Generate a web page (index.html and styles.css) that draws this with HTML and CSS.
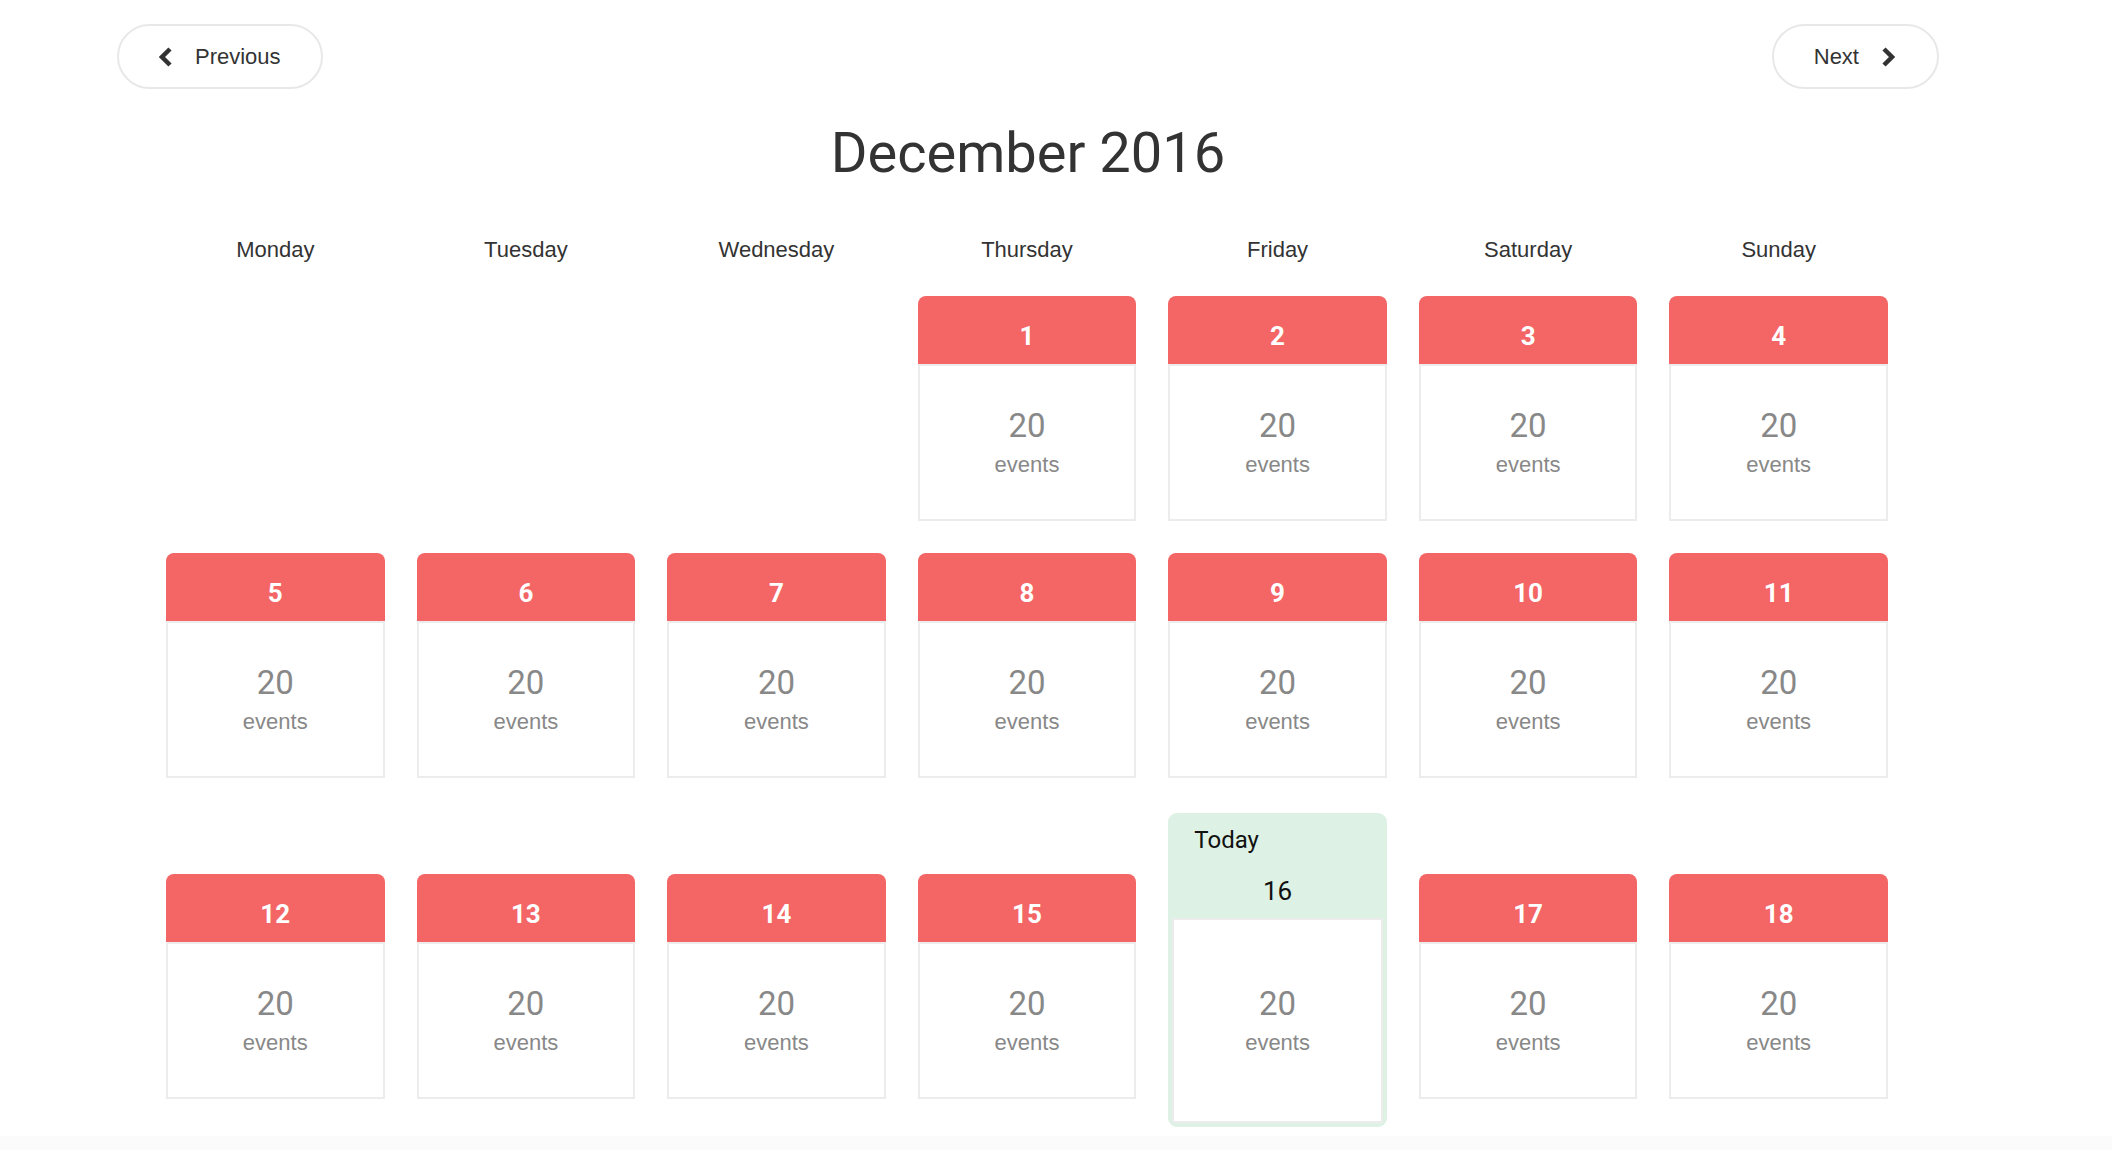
FILE: index.html
```html
<!DOCTYPE html>
<html lang="en">
<head>
<meta charset="utf-8">
<title>December 2016</title>
<link rel="stylesheet" href="styles.css">
</head>
<body>
<div class="page">
  <nav class="nav">
    <button class="nav-btn">
      <svg class="chev" width="14" height="20" viewBox="0 0 14 20"><polyline points="11,2 3,10 11,18"/></svg>
      <span>Previous</span>
    </button>
    <button class="nav-btn nav-next">
      <span>Next</span>
      <svg class="chev" width="14" height="20" viewBox="0 0 14 20"><polyline points="3,2 11,10 3,18"/></svg>
    </button>
  </nav>

  <h1 class="title">December 2016</h1>

  <div class="calendar">
    <div class="week weekdays">
      <div class="wd">Monday</div>
      <div class="wd">Tuesday</div>
      <div class="wd">Wednesday</div>
      <div class="wd">Thursday</div>
      <div class="wd">Friday</div>
      <div class="wd">Saturday</div>
      <div class="wd">Sunday</div>
    </div>

    <div class="week">
      <div class="empty"></div>
      <div class="empty"></div>
      <div class="empty"></div>
      <div class="day"><div class="day-head">1</div><div class="day-body"><span class="count">20</span><span class="label">events</span></div></div>
      <div class="day"><div class="day-head">2</div><div class="day-body"><span class="count">20</span><span class="label">events</span></div></div>
      <div class="day"><div class="day-head">3</div><div class="day-body"><span class="count">20</span><span class="label">events</span></div></div>
      <div class="day"><div class="day-head">4</div><div class="day-body"><span class="count">20</span><span class="label">events</span></div></div>
    </div>

    <div class="week">
      <div class="day"><div class="day-head">5</div><div class="day-body"><span class="count">20</span><span class="label">events</span></div></div>
      <div class="day"><div class="day-head">6</div><div class="day-body"><span class="count">20</span><span class="label">events</span></div></div>
      <div class="day"><div class="day-head">7</div><div class="day-body"><span class="count">20</span><span class="label">events</span></div></div>
      <div class="day"><div class="day-head">8</div><div class="day-body"><span class="count">20</span><span class="label">events</span></div></div>
      <div class="day"><div class="day-head">9</div><div class="day-body"><span class="count">20</span><span class="label">events</span></div></div>
      <div class="day"><div class="day-head">10</div><div class="day-body"><span class="count">20</span><span class="label">events</span></div></div>
      <div class="day"><div class="day-head">11</div><div class="day-body"><span class="count">20</span><span class="label">events</span></div></div>
    </div>

    <div class="week has-today">
      <div class="day"><div class="day-head">12</div><div class="day-body"><span class="count">20</span><span class="label">events</span></div></div>
      <div class="day"><div class="day-head">13</div><div class="day-body"><span class="count">20</span><span class="label">events</span></div></div>
      <div class="day"><div class="day-head">14</div><div class="day-body"><span class="count">20</span><span class="label">events</span></div></div>
      <div class="day"><div class="day-head">15</div><div class="day-body"><span class="count">20</span><span class="label">events</span></div></div>
      <div class="today">
        <div class="today-head">
          <div class="today-label">Today</div>
          <div class="today-date">16</div>
        </div>
        <div class="today-body"><span class="count">20</span><span class="label">events</span></div>
      </div>
      <div class="day"><div class="day-head">17</div><div class="day-body"><span class="count">20</span><span class="label">events</span></div></div>
      <div class="day"><div class="day-head">18</div><div class="day-body"><span class="count">20</span><span class="label">events</span></div></div>
    </div>
  </div>
</div>
<div class="footer"></div>
</body>
</html>
```

FILE: styles.css
```css
html, body {
  margin: 0;
  padding: 0;
  background: #ffffff;
}

body {
  font-family: "Liberation Sans", Arial, sans-serif;
  color: #333333;
}

.page {
  width: 1822px;
  margin-left: 117px;
  padding-top: 24px;
}

.nav {
  display: flex;
  justify-content: space-between;
  align-items: center;
}

.nav-btn {
  display: flex;
  align-items: center;
  gap: 22px;
  height: 65px;
  padding: 0 40px;
  border: 2px solid #e8e8e8;
  border-radius: 33px;
  background: #ffffff;
  font-family: "Liberation Sans", Arial, sans-serif;
  font-size: 22px;
  color: #333333;
  line-height: 22px;
  cursor: pointer;
}

.nav-next {
  padding: 0 42px 0 40px;
}

.chev polyline {
  fill: none;
  stroke: #333333;
  stroke-width: 4.5;
  stroke-linejoin: miter;
  stroke-linecap: butt;
}

.title {
  margin: 36px 0 0;
  font-family: Roboto, "Liberation Sans", sans-serif;
  font-weight: 400;
  font-size: 56px;
  line-height: 56px;
  text-align: center;
  color: #333333;
}

.calendar {
  margin-top: 58px;
  padding: 0 51px 0 49px;
  display: flex;
  flex-direction: column;
  gap: 32px;
}

.week {
  display: grid;
  grid-template-columns: repeat(7, 1fr);
  column-gap: 32px;
  align-items: start;
}

.weekdays {
  margin-bottom: 3px;
}

.wd {
  text-align: center;
  font-size: 22px;
  line-height: 22px;
  color: #333333;
}

.day {
  display: flex;
  flex-direction: column;
}

.day-head {
  height: 56px;
  padding-top: 12px;
  display: flex;
  align-items: center;
  justify-content: center;
  background: #f46565;
  border-radius: 8px 8px 0 0;
  color: #ffffff;
  font-family: Roboto, "Liberation Sans", sans-serif;
  font-weight: 700;
  font-size: 26px;
}

.day-body {
  height: 153px;
  border: 2px solid #ececec;
  display: flex;
  flex-direction: column;
  align-items: center;
  justify-content: center;
  gap: 8px;
}

.day-body, .today-body {
  color: #888888;
}

.count {
  font-family: Roboto, "Liberation Sans", sans-serif;
  font-size: 33px;
  line-height: 36px;
}

.label {
  font-family: "Liberation Sans", Arial, sans-serif;
  font-size: 22px;
  line-height: 26px;
}

.has-today {
  align-items: end;
}

.has-today .day {
  margin-bottom: 28px;
}

.today {
  margin-top: 3px;
  border: 4px solid #ddf1e4;
  border-radius: 9px;
  background: #ddf1e4;
  display: flex;
  flex-direction: column;
}

.today-head {
  padding: 11px 22px 14px;
  color: #111111;
  font-family: Roboto, "Liberation Sans", sans-serif;
}

.today-label {
  font-size: 24px;
  line-height: 24px;
}

.today-date {
  margin-top: 26px;
  font-size: 26px;
  line-height: 26px;
  text-align: center;
}

.today-body {
  height: 201px;
  background: #ffffff;
  border: 2px solid #ececec;
  display: flex;
  flex-direction: column;
  align-items: center;
  justify-content: center;
  gap: 8px;
}

.footer {
  margin-top: 9px;
  height: 40px;
  background: #fbfbfb;
}
```
